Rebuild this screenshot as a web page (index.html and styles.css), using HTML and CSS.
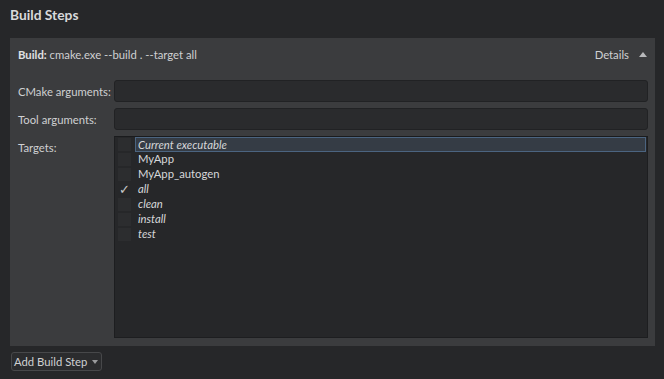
FILE: index.html
```html
<!DOCTYPE html>
<html>
<head>
<meta charset="utf-8">
<link rel="stylesheet" href="styles.css">
</head>
<body>
<div class="page">
  <div class="title">Build Steps</div>
  <div class="panel">
    <div class="panel-head">
      <div class="summary"><b>Build:</b> cmake.exe --build . --target all</div>
      <div class="details">Details <span class="up"></span></div>
    </div>
    <div class="form">
      <div class="label">CMake arguments:</div>
      <div class="input"></div>
      <div class="label">Tool arguments:</div>
      <div class="input"></div>
      <div class="label label-top">Targets:</div>
      <div class="list">
        <div class="item sel"><span class="cb"></span><span class="txt it">Current executable</span></div>
        <div class="item"><span class="cb"></span><span class="txt">MyApp</span></div>
        <div class="item"><span class="cb"></span><span class="txt">MyApp_autogen</span></div>
        <div class="item"><span class="cb checked">✓</span><span class="txt it">all</span></div>
        <div class="item"><span class="cb"></span><span class="txt it">clean</span></div>
        <div class="item"><span class="cb"></span><span class="txt it">install</span></div>
        <div class="item"><span class="cb"></span><span class="txt it">test</span></div>
      </div>
    </div>
  </div>
  <div class="btn">Add Build Step <span class="down"></span></div>
</div>
</body>
</html>
```
FILE: styles.css
```css
html, body {
  margin: 0;
  padding: 0;
  background: #262729;
  width: 664px;
  height: 379px;
  overflow: hidden;
}
.page {
  font-family: Lato, sans-serif;
  font-size: 11.3px;
  color: #cfd0d2;
  padding: 6px 9px 0 10px;
}
.title {
  font-weight: bold;
  font-size: 13.8px;
  color: #d8d9db;
  height: 20px;
  line-height: 18px;
}
.panel {
  margin-top: 12px;
  background: #3b3c3e;
  height: 308px;
  box-sizing: border-box;
  padding: 0 7px 0 8px;
}
.panel-head {
  display: flex;
  justify-content: space-between;
  align-items: center;
  height: 33px;
  white-space: nowrap;
}
.summary b { color: #e0e1e3; }
.details {
  display: flex;
  align-items: center;
  gap: 10px;
  padding-right: 1px;
  color: #d0d1d3;
}
.up {
  width: 0; height: 0;
  border-left: 4px solid transparent;
  border-right: 4px solid transparent;
  border-bottom: 5px solid #b8b9bb;
}
.form {
  display: grid;
  grid-template-columns: 96px 1fr;
  row-gap: 6px;
  margin-top: 9px;
}
.label {
  display: flex;
  align-items: center;
  white-space: nowrap;
  color: #cfd0d2;
}
.label-top { align-items: flex-start; padding-top: 5px; }
.input {
  height: 22px;
  box-sizing: border-box;
  background: #2a2b2d;
  border: 1px solid #212224;
  border-radius: 3px;
}
.list {
  height: 202px;
  box-sizing: border-box;
  background: #262729;
  border: 1px solid #1d1e20;
  border-top-color: #1a1b1d;
  padding: 0 1px 0 3px;
}
.item {
  display: flex;
  align-items: center;
  height: 15px;
  color: #d6d7d9;
}
.cb {
  width: 13px;
  height: 13px;
  box-sizing: border-box;
  background: #2c2d2f;
  margin-right: 4px;
  flex: none;
  color: #c8c9cb;
  font-size: 13px;
  line-height: 13px;
  text-align: center;
}
.cb.checked { background: transparent; }
.txt {
  flex: 1;
  height: 15px;
  line-height: 14px;
  padding-left: 3px;
  box-sizing: border-box;
  white-space: nowrap;
}
.it { font-style: italic; }
.sel .txt {
  background: #353c45;
  border: 1px solid #4b6480;
  padding-left: 2px;
  line-height: 13px;
}
.btn {
  display: inline-flex;
  align-items: center;
  gap: 5px;
  margin-top: 6px;
  height: 19px;
  box-sizing: border-box;
  padding: 0 3px 0 2px;
  border: 1px solid #47484a;
  border-radius: 3px;
  background: #2b2c2e;
  color: #cfd0d2;
  margin-left: 1px;
}
.down {
  width: 0; height: 0;
  border-left: 3px solid transparent;
  border-right: 3px solid transparent;
  border-top: 4px solid #9a9b9d;
}
```
